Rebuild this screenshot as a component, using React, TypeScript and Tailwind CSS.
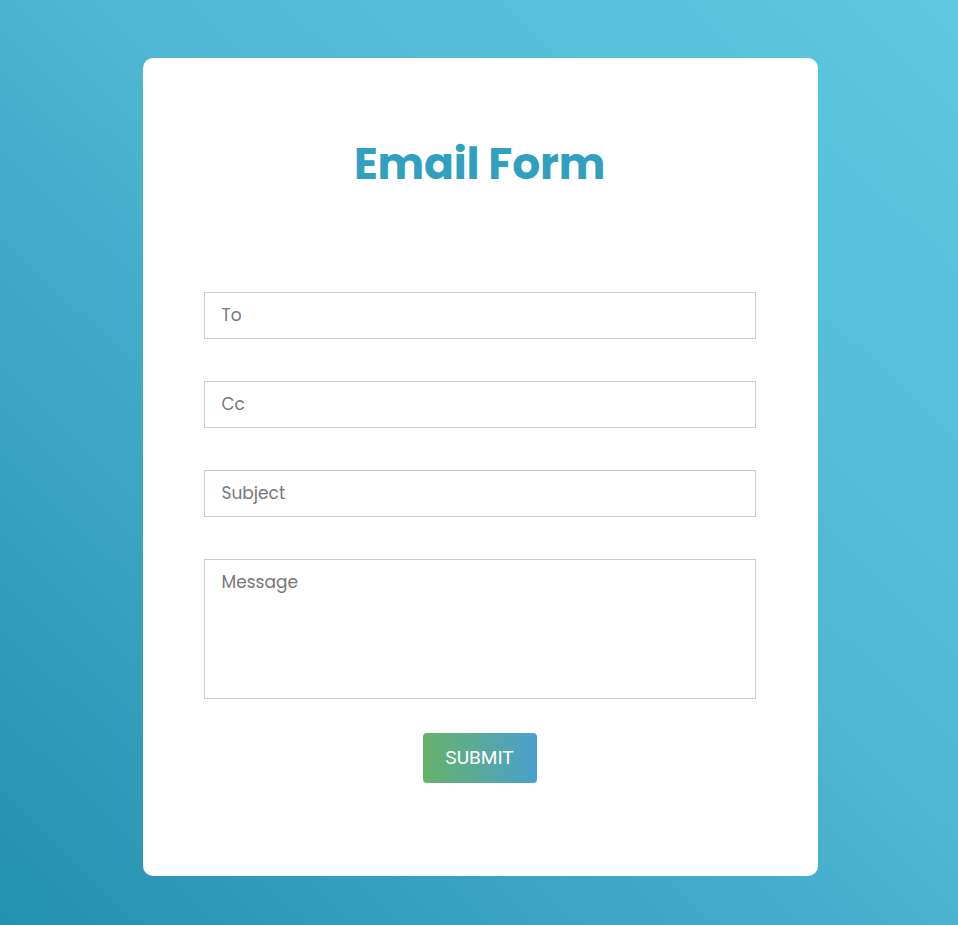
import React from "react";

export default function App() {
  const inputCls =
    "w-full h-[47px] border border-[#cccccc] bg-white px-[17px] pb-[2px] text-[17px] text-[#555] placeholder:text-[#777] outline-none";
  return (
    <div
      className="min-h-[925px] w-full flex justify-center pl-[2px] pt-[58px] pb-[49px] bg-[linear-gradient(to_top_right,#2490b0,#4fb6d3_55%,#5ec9e1)]"
      style={{ fontFamily: '"Poppins", "Lato", "Noto Sans", sans-serif' }}
    >
      <div className="w-[675px] h-[818px] bg-white rounded-[10px] pl-[61px] pr-[62px] flex flex-col">
        <h1 className="mt-[76px] text-center text-[44px] leading-[60px] font-bold text-[#31a0bf] tracking-[-0.2px]">
          Email Form
        </h1>
        <form className="mt-[98px] flex flex-col">
          <input className={inputCls} placeholder="To" />
          <input className={inputCls + " mt-[42px]"} placeholder="Cc" />
          <input className={inputCls + " mt-[42px]"} placeholder="Subject" />
          <textarea
            className="mt-[42px] w-full h-[140px] border border-[#cccccc] bg-white px-[17px] py-[10px] text-[17px] text-[#555] placeholder:text-[#777] outline-none resize-none"
            placeholder="Message"
          />
          <div className="flex justify-center mt-[34px]">
            <button
              type="button"
              className="w-[114px] h-[50px] rounded-[4px] text-white text-[19px] bg-[linear-gradient(to_right,#67b26a,#4aa0cf)]"
              style={{ fontFamily: '"Roboto", "Liberation Sans", sans-serif' }}
            >
              SUBMIT
            </button>
          </div>
        </form>
      </div>
    </div>
  );
}
